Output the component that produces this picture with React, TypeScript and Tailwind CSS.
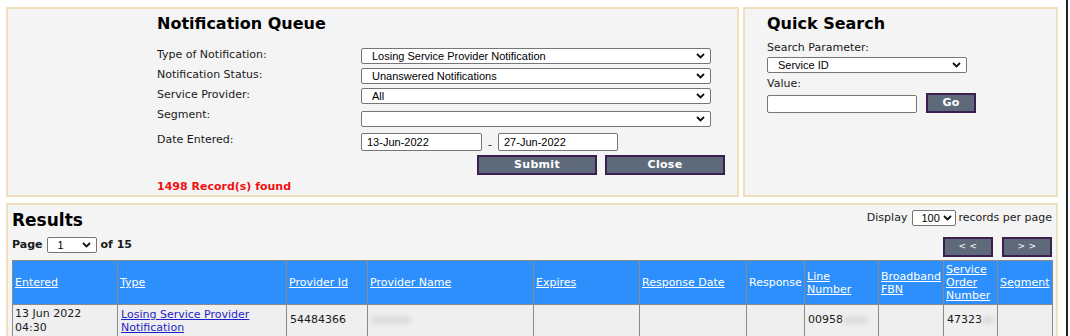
import React from "react";

const verdana = { fontFamily: '"DejaVu Sans", Verdana, sans-serif' };
const arial = { fontFamily: '"Liberation Sans", Arial, sans-serif' };

function Chevron() {
  return (
    <svg width="9" height="6" viewBox="0 0 9 6" className="shrink-0">
      <path d="M1 1 L4.5 4.5 L8 1" fill="none" stroke="#111" strokeWidth="1.8" />
    </svg>
  );
}

function FakeSelect({ value, className }: { value: string; className: string }) {
  return (
    <div
      style={arial}
      className={`flex items-center justify-between bg-white border border-[#767676] rounded-[2px] text-[11px] text-black pl-[10px] pr-[5px] overflow-hidden whitespace-nowrap ${className}`}
    >
      <span className="overflow-hidden">{value}</span>
      <Chevron />
    </div>
  );
}

function TextBox({ value, className }: { value: string; className: string }) {
  return (
    <div
      style={arial}
      className={`flex items-center bg-white border border-[#767676] rounded-[2px] text-[11px] text-black pl-[5px] ${className}`}
    >
      {value}
    </div>
  );
}

function Btn({ label, className }: { label: string; className: string }) {
  return (
    <button
      style={verdana}
      className={`bg-[#5e6a7a] border-2 border-[#3b1f4f] text-white font-bold text-[11px] tracking-[0.3px] flex items-center justify-center ${className}`}
    >
      {label}
    </button>
  );
}

const cols = [
  { label: "Entered", w: 105, link: true },
  { label: "Type", w: 169, link: true },
  { label: "Provider Id", w: 81, link: true },
  { label: "Provider Name", w: 166, link: true },
  { label: "Expires", w: 106, link: true },
  { label: "Response Date", w: 107, link: true },
  { label: "Response", w: 58, link: false },
  { label: "Line Number", w: 74, link: true },
  { label: "Broadband FBN", w: 65, link: true },
  { label: "Service Order Number", w: 54, link: true },
  { label: "Segment", w: 55, link: true },
];

function Blur({ w }: { w: number }) {
  return <span className="inline-block h-[8px] bg-[#dcdcdc] blur-[2px] align-middle rounded-sm" style={{ width: w }} />;
}

export default function App() {
  return (
    <div style={verdana} className="w-[1068px] min-h-[336px] bg-white border-r-2 border-[#222] text-[#1a1a1a] pl-[6px] pt-[7px] overflow-hidden">
      <div className="flex gap-[4px] w-[1052px]">
        {/* Notification Queue */}
        <div className="w-[733px] h-[190px] bg-[#f4f4f4] border-2 border-[#efdfbd] pl-[149px] pt-[3px]">
          <div className="text-[16px] font-bold text-black leading-[24px] h-[36px]">Notification Queue</div>
          <div className="flex h-[20px]">
            <div className="w-[204px] text-[11px] leading-[14px]">Type of Notification:</div>
            <FakeSelect value="Losing Service Provider Notification" className="w-[350px] h-[16px]" />
          </div>
          <div className="flex h-[20px]">
            <div className="w-[204px] text-[11px] leading-[14px]">Notification Status:</div>
            <FakeSelect value="Unanswered Notifications" className="w-[350px] h-[16px]" />
          </div>
          <div className="flex h-[23px]">
            <div className="w-[204px] text-[11px] leading-[14px]">Service Provider:</div>
            <FakeSelect value="All" className="w-[350px] h-[16px]" />
          </div>
          <div className="flex h-[22px]">
            <div className="w-[204px] text-[11px] leading-[14px] -mt-[3px]">Segment:</div>
            <FakeSelect value="" className="w-[350px] h-[16px]" />
          </div>
          <div className="flex h-[22px]">
            <div className="w-[204px] text-[11px] leading-[14px]">Date Entered:</div>
            <TextBox value="13-Jun-2022" className="w-[121px] h-[18px]" />
            <span className="w-[16px] text-center text-[11px] leading-[24px]">-</span>
            <TextBox value="27-Jun-2022" className="w-[120px] h-[18px]" />
          </div>
          <div className="flex gap-[8px] pl-[320px]">
            <Btn label="Submit" className="w-[120px] h-[20px]" />
            <Btn label="Close" className="w-[120px] h-[20px]" />
          </div>
          <div className="text-[11px] font-bold text-[#ee1111] mt-[5px] leading-[14px]">1498 Record(s) found</div>
        </div>

        {/* Quick Search */}
        <div className="w-[315px] h-[190px] bg-[#f4f4f4] border-2 border-[#efdfbd] pl-[22px] pt-[3px]">
          <div className="text-[16px] font-bold text-black leading-[24px] h-[29px]">Quick Search</div>
          <div className="text-[11px] leading-[14px] h-[16px]">Search Parameter:</div>
          <FakeSelect value="Service ID" className="w-[200px] h-[16px]" />
          <div className="text-[11px] leading-[14px] mt-[4px] h-[18px]">Value:</div>
          <div className="flex items-end gap-[9px]">
            <TextBox value="" className="w-[150px] h-[18px]" />
            <Btn label="Go" className="w-[50px] h-[20px] -mt-[2px]" />
          </div>
        </div>
      </div>

      {/* Results */}
      <div className="mt-[6px] w-[1052px] h-[140px] bg-[#f4f4f4] border-2 border-[#efdfbd] border-b-0 px-[4px] pt-[3px]">
        <div className="flex justify-between items-start">
          <div className="text-[17px] font-bold text-black leading-[24px]">Results</div>
          <div className="flex items-center text-[11px] h-[16px] mt-[2px]">
            <span className="mr-[5px]">Display</span>
            <FakeSelect value="100" className="w-[44px] h-[16px] !pl-[8px] !pr-[3px]" />
            <span className="ml-[2px]">records per page</span>
          </div>
        </div>
        <div className="flex justify-between items-end mt-[4px]">
          <div className="flex items-center text-[11px] font-bold h-[18px] mb-[3px]">
            <span className="mr-[4px]">Page</span>
            <FakeSelect value="1" className="w-[50px] h-[16px] font-normal" />
            <span className="ml-[4px]">of 15</span>
          </div>
          <div className="flex gap-[9px]">
            <Btn label="< <" className="w-[50px] h-[20px] font-normal !text-[9px]" />
            <Btn label="> >" className="w-[50px] h-[20px] font-normal !text-[9px]" />
          </div>
        </div>
        <table className="mt-[3px] border-collapse table-fixed w-[1040px] text-[11px]">
          <colgroup>
            {cols.map((c) => (
              <col key={c.label} style={{ width: c.w }} />
            ))}
          </colgroup>
          <thead>
            <tr className="h-[44px] bg-[#2d8ffb]">
              {cols.map((c) => (
                <th key={c.label} className="border border-[#8a8a8a] text-left font-normal px-[2px] text-white leading-[13px] align-middle">
                  {c.link ? <span className="underline">{c.label}</span> : c.label}
                </th>
              ))}
            </tr>
          </thead>
          <tbody>
            <tr className="h-[32px] bg-[#efefef]">
              <td className="border border-[#8a8a8a] px-[2px] leading-[14px]">13 Jun 2022<br />04:30</td>
              <td className="border border-[#8a8a8a] px-[3px] leading-[13px]">
                <span className="underline text-[#1f1fc8]">Losing Service Provider Notification</span>
              </td>
              <td className="border border-[#8a8a8a] px-[3px]">54484366</td>
              <td className="border border-[#8a8a8a] px-[3px]"><Blur w={40} /></td>
              <td className="border border-[#8a8a8a]"></td>
              <td className="border border-[#8a8a8a]"></td>
              <td className="border border-[#8a8a8a]"></td>
              <td className="border border-[#8a8a8a] px-[3px] whitespace-nowrap">00958<Blur w={25} /></td>
              <td className="border border-[#8a8a8a]"></td>
              <td className="border border-[#8a8a8a] px-[3px] whitespace-nowrap overflow-hidden">47323<Blur w={12} /></td>
              <td className="border border-[#8a8a8a]"></td>
            </tr>
          </tbody>
        </table>
      </div>
    </div>
  );
}
